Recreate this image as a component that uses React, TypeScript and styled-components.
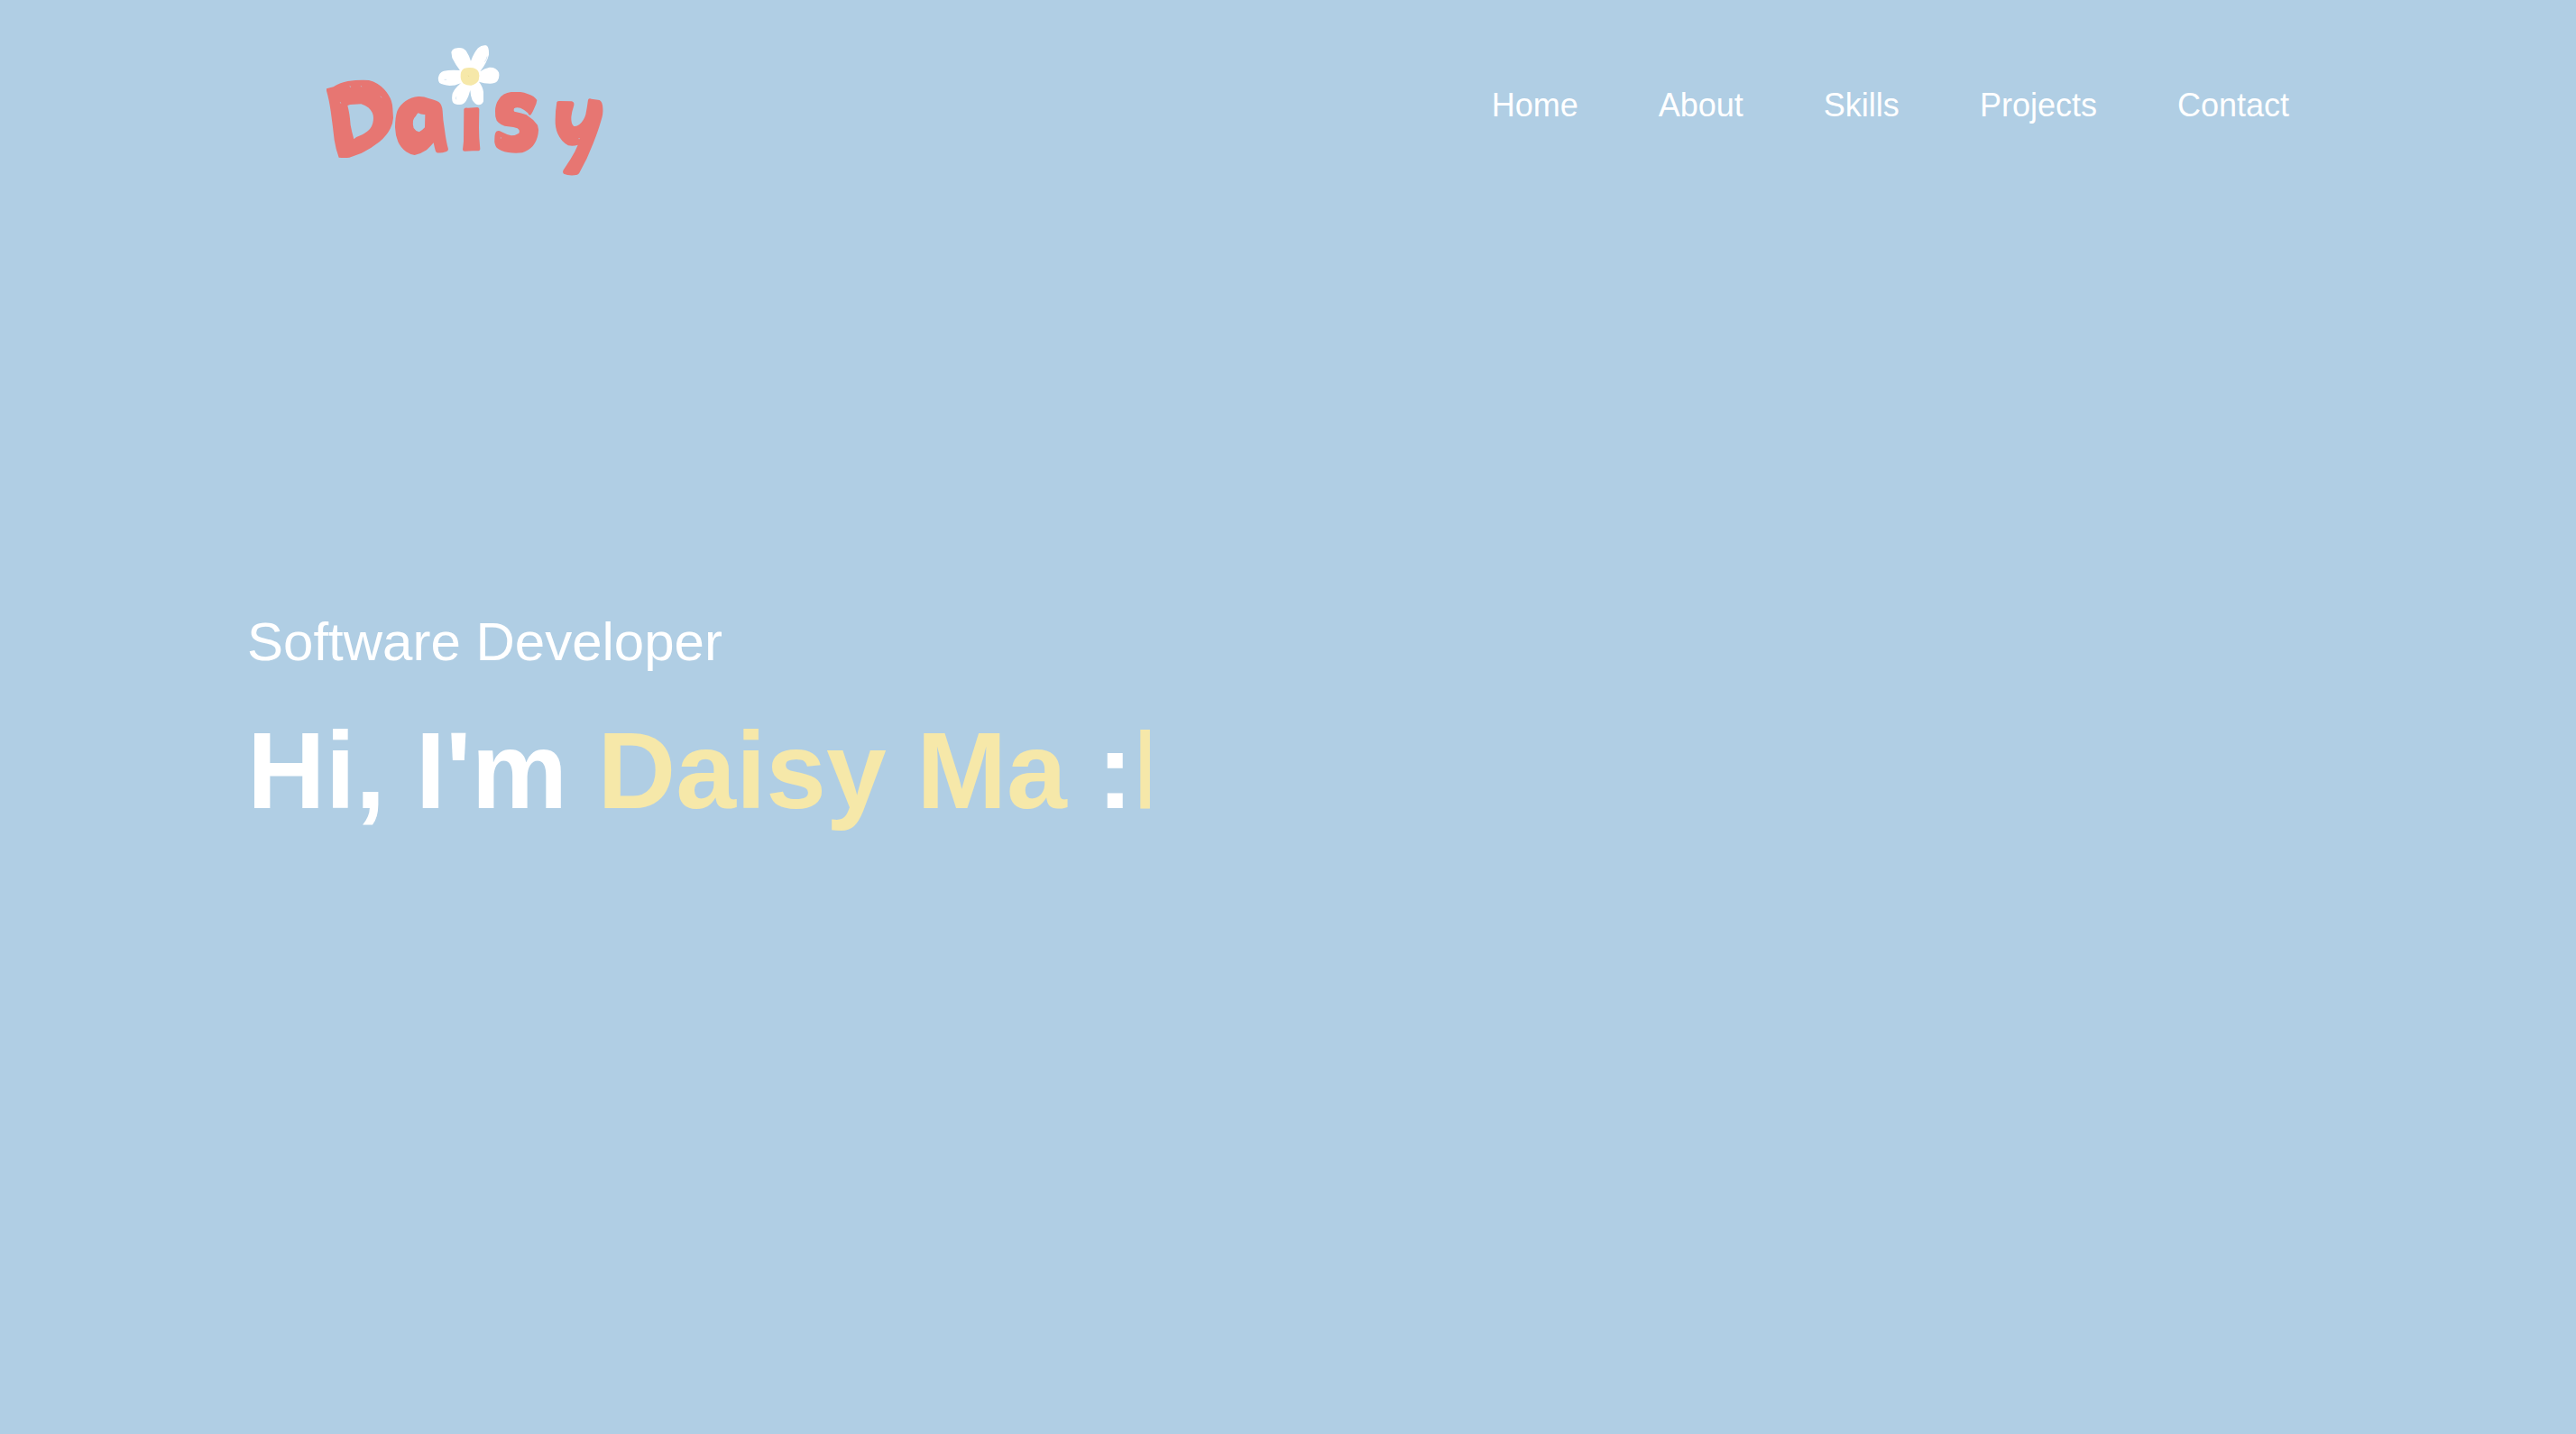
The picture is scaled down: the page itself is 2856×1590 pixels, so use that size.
import React from "react";
import styled, { createGlobalStyle } from "styled-components";

const colors = {
  sky: "#b0cee4",
  coral: "#e77672",
  butter: "#f6e8a9",
  white: "#ffffff",
};

const GlobalStyle = createGlobalStyle`
  *, *::before, *::after { box-sizing: border-box; }
  body {
    margin: 0;
    background: ${colors.sky};
    color: ${colors.white};
    font-family: Helvetica, "Liberation Sans", Arial, sans-serif;
  }
`;

const Page = styled.div`
  display: flex;
  flex-direction: column;
  min-height: 100vh;
  padding: 30px 274px 0;
`;

const Header = styled.header`
  display: flex;
  align-items: center;
  justify-content: space-between;
  padding: 0 44px 0 66px;
`;

const LogoLink = styled.a`
  display: block;
`;

const LogoArt = styled.svg`
  display: block;
  width: 350px;
  height: 174px;
`;

const NavList = styled.ul`
  display: flex;
  gap: 89px;
  margin: 0;
  padding: 0;
  list-style: none;
`;

const NavLink = styled.a`
  color: ${colors.white};
  font-size: 36px;
  line-height: 44px;
  text-decoration: none;
`;

const Hero = styled.main`
  display: flex;
  flex: 1;
  flex-direction: column;
  justify-content: center;
  gap: 34px;
  padding-bottom: 192px;
`;

const Role = styled.p`
  margin: 0;
  font-size: 60px;
  line-height: 72px;
`;

const Greeting = styled.h1`
  margin: 0;
  font-size: 120px;
  font-weight: 700;
  line-height: 144px;
`;

const Name = styled.span`
  color: ${colors.butter};
`;

const Cursor = styled.span`
  color: ${colors.butter};
  font-weight: 400;
`;

const links = ["Home", "About", "Skills", "Projects", "Contact"];

function Logo() {
  return (
    <LogoArt viewBox="0 0 1050 522" role="img" aria-label="Daisy">
      <g fill={colors.coral} fillRule="evenodd">
        <path d="M66 205 L89 199 Q112 184 137 180 Q172 175 207 177 Q222 180 236 189 Q259 204 272 226 Q285 246 286 270 L288 302 Q287 322 278 338 Q266 361 242 382 Q216 403 183 419 L142 434 Q126 436 107 434 Q96 403 92 376 Q87 330 80 280 Q74 238 66 212 Z M136 261 Q143 257 157 257 L181 256 Q195 260 205 268 Q222 283 222 303 Q222 322 212 337 Q204 348 185 358 Q167 364 157 373 Q150 348 146 326 Q143 286 136 261 Z" />
        <path d="M371 231 Q390 230 405 237 Q428 242 440 250 Q451 260 452 279 Q453 309 459 342 Q464 382 471 406 Q471 413 463 415 Q447 420 433 418 Q428 415 426 403 L422 385 Q411 398 399 409 Q380 422 359 426 Q346 425 331 415 Q313 402 304 382 Q295 360 294 334 Q294 302 301 280 Q309 260 329 246 Q349 233 371 231 Z M371 286 Q381 292 394 291 L393 334 Q385 343 374 349 Q362 346 356 336 Q352 323 354 311 Q357 301 363 296 Q367 288 371 286 Z" />
        <path d="M523 273 Q525 268 536 269 L568 267 Q574 268 574 273 L573 336 Q573 370 577 405 Q577 412 568 412 Q544 411 526 413 Q519 413 519 407 L522 380 Z" />
        <path d="M680 216 L711 216 Q724 217 736 223 Q758 230 766 243 Q765 255 757 270 Q750 287 744 293 Q737 294 736 286 Q727 276 711 269 Q697 265 690 271 Q687 278 691 281 Q711 284 731 292 Q754 307 768 326 Q773 340 770 355 Q766 379 752 396 Q737 412 717 418 Q693 421 670 417 Q645 413 632 401 Q623 389 625 372 Q625 352 631 347 Q639 343 647 348 Q664 357 680 361 Q694 361 706 353 Q711 344 701 337 Q690 333 670 331 Q646 329 632 311 Q626 298 627 280 Q627 256 640 239 Q652 220 680 216 Z" />
        <path d="M832 250 Q833 246 841 246 L882 247 Q891 250 889 260 Q882 281 880 299 Q879 322 888 329 Q896 332 907 324 Q922 312 928 291 Q933 265 936 242 Q939 236 947 239 L974 243 Q984 248 985 270 Q987 288 979 312 Q970 344 953 387 Q934 438 906 487 Q902 493 891 493 Q869 495 855 488 Q850 485 853 477 Q865 459 878 439 Q894 413 902 392 Q888 397 870 394 Q847 382 835 355 Q826 334 827 309 Q827 278 832 250 Z" />
      </g>
      <g fill={colors.white}>
        <path d="M481 83 Q484 74 492 71 L505 69 Q521 68 530 79 Q540 94 546 113 Q556 86 570 70 Q583 58 597 61 Q607 65 606 92 Q600 117 577 148 Q590 137 608 134 Q631 133 639 151 Q643 167 634 180 Q626 188 610 188 Q590 188 573 182 Q586 198 588 216 L588 247 Q584 259 572 259 Q561 259 551 243 Q545 229 544 210 Q539 231 530 246 Q522 258 510 258 Q492 258 487 251 Q481 242 485 221 Q491 205 513 186 Q496 195 476 195 Q452 192 442 186 Q436 177 438 167 Q441 150 456 146 Q480 141 510 144 Q496 127 484 103 Z" />
        <circle cx="542" cy="165" r="32" />
      </g>
      <path fill={colors.butter} d="M523 138 Q537 133 553 136 Q567 139 572 150 Q577 163 572 177 Q565 190 548 194 Q533 195 522 188 Q512 179 512 165 Q511 146 523 138 Z" />
      <g fill="none" stroke={colors.sky} strokeLinecap="round" strokeWidth="2">
        <path d="M497 233 Q494 237 497 240 M459 175 L464 175 M593 115 Q599 107 600 99" opacity="0.7" />
        <path d="M144 196 L146 200 M181 196 L182 198 M112 250 L113 253 M246 231 L249 234 M646 367 L646 370 M905 371 L908 371" opacity="0.8" />
      </g>
      <path fill="none" stroke="#e5d68f" strokeLinecap="round" strokeWidth="2" d="M538 162 L539 164" />
    </LogoArt>
  );
}

export default function App() {
  return (
    <>
      <GlobalStyle />
      <Page>
        <Header>
          <LogoLink href="#home">
            <Logo />
          </LogoLink>
          <nav aria-label="Main">
            <NavList>
              {links.map((label) => (
                <li key={label}>
                  <NavLink href={`#${label.toLowerCase()}`}>{label}</NavLink>
                </li>
              ))}
            </NavList>
          </nav>
        </Header>
        <Hero id="home">
          <Role>Software Developer</Role>
          <Greeting>
            Hi, I'm <Name>Daisy Ma</Name> :<Cursor>l</Cursor>
          </Greeting>
        </Hero>
      </Page>
    </>
  );
}
